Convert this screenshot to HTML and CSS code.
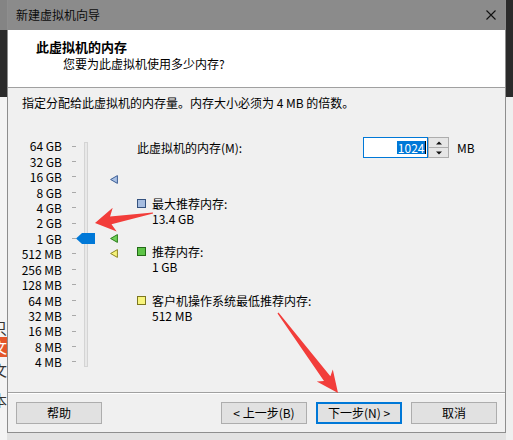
FILE: index.html
```html
<!DOCTYPE html>
<html lang="zh-CN">
<head>
<meta charset="utf-8">
<title>新建虚拟机向导</title>
<link rel="stylesheet" href="styles.css">
</head>
<body>
<div class="desktop">
  <div class="edge edge-left">
    <div class="seg seg-gray"></div>
    <div class="seg seg-dark"></div>
    <div class="seg seg-light">
      <div class="frag frag-a">只</div>
      <div class="frag frag-orange">文</div>
      <div class="frag frag-b">文</div>
      <div class="frag frag-c">本</div>
    </div>
  </div>

  <div class="dialog">
    <div class="titlebar">
      <span class="title">新建虚拟机向导</span>
      <svg class="close" width="10" height="10" viewBox="0 0 10 10"><path d="M0.5 0.5L9.5 9.5M9.5 0.5L0.5 9.5" stroke="#111" stroke-width="1.1" fill="none"/></svg>
    </div>

    <div class="header">
      <div class="h-title">此虚拟机的内存</div>
      <div class="h-sub">您要为此虚拟机使用多少内存?</div>
    </div>

    <div class="content">
      <div class="intro">指定分配给此虚拟机的内存量。内存大小必须为 4 MB 的倍数。</div>
      <div class="main">
        <div class="scale">
          <div class="labels">
            <div class="lbl">64 GB</div>
            <div class="lbl">32 GB</div>
            <div class="lbl">16 GB</div>
            <div class="lbl">8 GB</div>
            <div class="lbl">4 GB</div>
            <div class="lbl">2 GB</div>
            <div class="lbl">1 GB</div>
            <div class="lbl">512 MB</div>
            <div class="lbl">256 MB</div>
            <div class="lbl">128 MB</div>
            <div class="lbl">64 MB</div>
            <div class="lbl">32 MB</div>
            <div class="lbl">16 MB</div>
            <div class="lbl">8 MB</div>
            <div class="lbl">4 MB</div>
          </div>
          <div class="ticks">
            <div class="tick"></div><div class="tick"></div><div class="tick"></div>
            <div class="tick"></div><div class="tick"></div><div class="tick"></div>
            <div class="tick"></div><div class="tick"></div><div class="tick"></div>
            <div class="tick"></div><div class="tick"></div><div class="tick"></div>
            <div class="tick"></div><div class="tick"></div><div class="tick"></div>
          </div>
          <div class="track">
            <svg class="thumb" width="19" height="11" viewBox="0 0 19 11"><polygon points="0,5.5 6,0 19,0 19,11 6,11" fill="#0078d7"/></svg>
          </div>
          <div class="markers">
            <svg class="marker" style="top:32.5px" width="8" height="9" viewBox="0 0 8 9"><polygon points="0.6,4.5 7.4,0.6 7.4,8.4" fill="#a9c0e4" stroke="#3d5f96" stroke-width="1"/></svg>
            <svg class="marker" style="top:91.5px" width="8" height="9" viewBox="0 0 8 9"><polygon points="0.6,4.5 7.4,0.6 7.4,8.4" fill="#6fd057" stroke="#2c7d1c" stroke-width="1"/></svg>
            <svg class="marker" style="top:106.5px" width="8" height="9" viewBox="0 0 8 9"><polygon points="0.6,4.5 7.4,0.6 7.4,8.4" fill="#f6f37a" stroke="#8d8622" stroke-width="1"/></svg>
          </div>
        </div>

        <div class="panel">
          <div class="mem-row">
            <span class="mem-label">此虚拟机的内存(M):</span>
            <div class="spin-input"><span class="sel">1024</span><span class="caret"></span></div>
            <div class="spinner">
              <div class="sb"><svg width="6" height="4" viewBox="0 0 6 4"><polygon points="0,3.5 3,0.5 6,3.5" fill="#111"/></svg></div>
              <div class="sb"><svg width="6" height="4" viewBox="0 0 6 4"><polygon points="0,0.5 6,0.5 3,3.5" fill="#111"/></svg></div>
            </div>
            <span class="unit">MB</span>
          </div>

          <div class="legend">
            <div class="item">
              <span class="sq sq-blue"></span>
              <div class="txt"><div>最大推荐内存:</div><div>13.4 GB</div></div>
            </div>
            <div class="item">
              <span class="sq sq-green"></span>
              <div class="txt"><div>推荐内存:</div><div>1 GB</div></div>
            </div>
            <div class="item">
              <span class="sq sq-yellow"></span>
              <div class="txt"><div>客户机操作系统最低推荐内存:</div><div>512 MB</div></div>
            </div>
          </div>
        </div>
      </div>
    </div>

    <div class="footer">
      <button class="btn">帮助</button>
      <div class="spacer"></div>
      <button class="btn">&lt; 上一步(B)</button>
      <button class="btn btn-default">下一步(N) &gt;</button>
      <button class="btn">取消</button>
    </div>
  </div>

  <div class="edge edge-right">
    <div class="seg seg-dark2"></div>
    <div class="seg seg-light2"></div>
  </div>

  <svg class="annot" width="513" height="440" viewBox="0 0 513 440">
    <polygon fill="#f23d3a" points="152.9,212.4 110.1,216.4 112.7,207.8 95,223 116.7,231.4 111.5,224.2 153.1,213.6"/>
    <polygon fill="#f23d3a" points="277.5,313.4 324,381 316.8,381.4 338,393 332.8,369.4 330.4,376.2 278.5,312.6"/>
  </svg>
</div>
</body>
</html>
```

FILE: styles.css
```css
* { box-sizing: border-box; }

body { margin: 0; }

.desktop {
  position: relative;
  width: 513px;
  height: 440px;
  display: flex;
  align-items: flex-start;
  background: #e2e2e2;
  font-family: "Noto Sans CJK SC", "Noto Sans", sans-serif;
  font-size: 12px;
  color: #000;
  overflow: hidden;
}

/* background windows peeking at the edges */
.edge {
  width: 7px;
  height: 440px;
  display: flex;
  flex-direction: column;
  flex-shrink: 0;
}
.seg-gray { height: 30px; background: #848484; }
.seg-dark { height: 67px; background: #2b2b2b; }
.seg-light { flex: 1; background: #f4f4f4; padding-top: 222px; }
.seg-dark2 { height: 97px; background: #2b2b2b; }
.seg-light2 { flex: 1; background: #efefef; }

.frag {
  width: 7px;
  height: 18px;
  line-height: 18px;
  font-size: 15px;
  direction: rtl;
  overflow: hidden;
  white-space: nowrap;
  color: #333;
}
.frag-orange { background: #e4572a; color: #fff; height: 20px; line-height: 20px; }
.frag-b { margin-top: 4px; }
.frag-c { margin-top: 12px; }

/* dialog */
.dialog {
  width: 499px;
  height: 433px;
  flex-shrink: 0;
  border: 1px solid #8e8e8e;
  border-top: none;
  background: #f0f0f0;
  display: flex;
  flex-direction: column;
}

.titlebar {
  height: 30px;
  background: #8b8b8b;
  display: flex;
  align-items: center;
  padding-left: 8px;
  padding-right: 9px;
}
.title { line-height: 16px; color: #0c0c0c; }
.close { margin-left: auto; display: block; }

.header {
  height: 58px;
  background: #fff;
  border-bottom: 1px solid #a0a0a0;
  padding: 9px 0 0 28px;
}
.h-title { font-size: 13px; font-weight: bold; line-height: 16px; }
.h-sub { padding-left: 27px; margin-top: 1px; line-height: 16px; }

.content { flex: 1; }
.intro { padding: 7px 0 0 14px; line-height: 16px; }

.main { display: flex; }

.scale { display: flex; align-items: flex-start; }

.labels { width: 54px; padding-top: 27.3px; text-align: right; }
.lbl { height: 15.43px; line-height: 15.43px; white-space: nowrap; }

.ticks { width: 4px; margin-left: 10px; padding-top: 27.3px; }
.tick { height: 15.43px; display: flex; align-items: center; }
.tick::before { content: ""; width: 4px; height: 1px; background: #a9a9a9; }

.track {
  position: relative;
  width: 4px;
  height: 225px;
  margin-left: 8px;
  margin-top: 31px;
  border: 1px solid #d4d4d4;
  background: #e8e8e8;
}
.thumb { position: absolute; left: -9px; top: 90px; display: block; }

.markers {
  position: relative;
  width: 8px;
  height: 225px;
  margin-left: 22px;
  margin-top: 31px;
}
.marker { position: absolute; left: 0; display: block; }

.panel { margin-left: 19px; flex: 1; }

.mem-row {
  margin-top: 26px;
  height: 21px;
  display: flex;
  align-items: center;
}
.mem-label { width: 226px; line-height: 16px; }

.spin-input {
  width: 65px;
  height: 21px;
  border: 1px solid #0078d7;
  background: #fff;
  display: flex;
  align-items: center;
  justify-content: flex-end;
  padding-right: 1px;
}
.sel {
  background: #0078d7;
  color: #fff;
  line-height: 13px;
  height: 13px;
  padding: 0 0.5px;
}
.caret { width: 1px; height: 13px; background: #000; }

.spinner {
  width: 21px;
  height: 21px;
  display: flex;
  flex-direction: column;
}
.sb {
  flex: 1;
  border: 1px solid #adadad;
  background: #e6e6e6;
  display: flex;
  align-items: center;
  justify-content: center;
}
.sb + .sb { border-top: none; }
.sb svg { display: block; }

.unit { margin-left: 8px; line-height: 16px; }

.legend {
  margin-top: 37.5px;
  display: flex;
  flex-direction: column;
  gap: 18.5px;
}
.item { display: flex; line-height: 15px; }
.sq {
  width: 9px;
  height: 9px;
  margin-top: 3px;
  margin-right: 6px;
  border: 1px solid;
  flex-shrink: 0;
}
.sq-blue { background: #a6bde0; border-color: #34527f; }
.sq-green { background: #5dc447; border-color: #236a17; }
.sq-yellow { background: #f7f47c; border-color: #7c7620; }

.footer {
  height: 40px;
  border-top: 1px solid #a0a0a0;
  box-shadow: inset 0 1px 0 #ffffff;
  padding: 9px 8px 0;
  display: flex;
  align-items: flex-start;
  gap: 9px;
}
.spacer { flex: 1; }
.btn {
  width: 86px;
  height: 22px;
  padding: 0;
  border: 1px solid #adadad;
  background: #e1e1e1;
  font-family: inherit;
  font-size: 12px;
  line-height: 18px;
  color: #000;
}
.btn-default { border: 2px solid #0078d7; }

.annot {
  position: absolute;
  left: 0;
  top: 0;
  pointer-events: none;
}
```
